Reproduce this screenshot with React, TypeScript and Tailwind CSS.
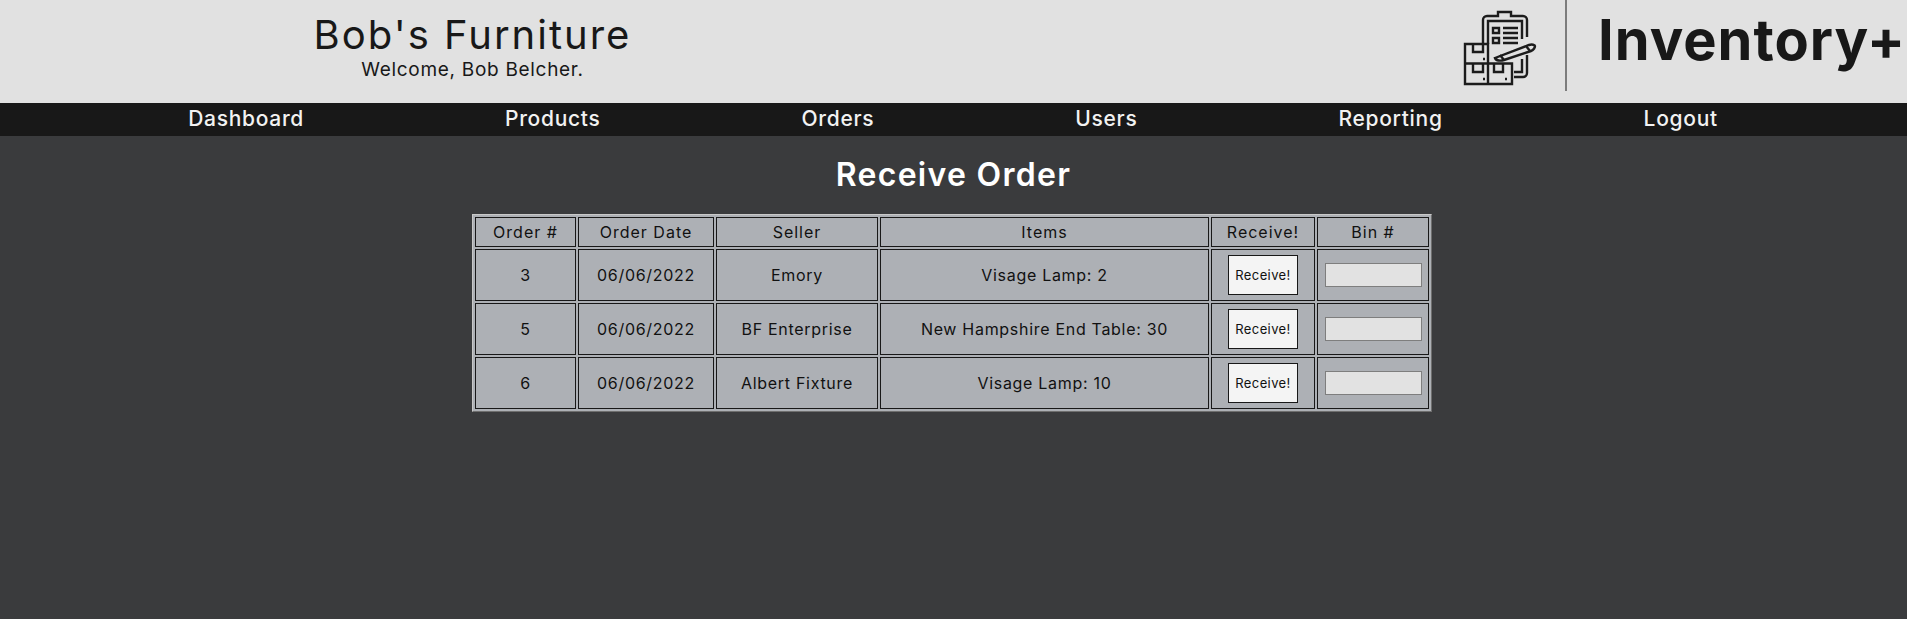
const NAV_LINKS = ['Dashboard', 'Products', 'Orders', 'Users', 'Reporting', 'Logout'];

const ORDERS = [
  { id: 3, date: '06/06/2022', seller: 'Emory', items: 'Visage Lamp: 2' },
  { id: 5, date: '06/06/2022', seller: 'BF Enterprise', items: 'New Hampshire End Table: 30' },
  { id: 6, date: '06/06/2022', seller: 'Albert Fixture', items: 'Visage Lamp: 10' },
];

function InventoryIcon() {
  return (
    <svg width="80" height="78" viewBox="0 0 80 78" fill="none" stroke="#1c1c1c" strokeWidth="2.4" className="blur-[0.4px]">
      {/* clipboard */}
      <path d="M23 34V10a4 4 0 0 1 4-4h11V2h13v4h12a4 4 0 0 1 4 4v17" />
      <path d="M28 34V11h34v18" />
      <path d="M67 45v18a4 4 0 0 1-4 4h-9" />
      <path d="M62 49v13h-8" />
      <path d="M33 18h6v5h-6zM33 28h6v5h-6z" />
      <path d="M43 18h15M43 23h15M43 28h15M43 33h15" />
      {/* pen */}
      <path d="M35 48l34-13c3-1 6 0 6 1s-1 4-4 5L44 50c-3 1-8 1-9-2z" />
      <path d="M40 45l4 5M66 36l4 5" />
      {/* boxes */}
      <path d="M5 34h23v19.500H5zM5 53.500h23V74H5zM28 53.500h24V74H28z" />
      <path d="M13 34v8h10v-8M13 54v8h10v-8M34 54v8h9v-8" />
      <path d="M23 49h2M23 69h2M45 69h2" />
    </svg>
  );
}

export default function App() {
  return (
    <div className="min-h-[619px] bg-[#3a3b3d] font-['Inter','Noto_Sans',sans-serif]">
      <header className="flex h-[103px] bg-[#e1e1e1] text-[#181818]">
        <div className="flex w-[945px] flex-col items-center pt-[12px]">
          <div className="text-[40px] leading-[46px] tracking-[2px]">Bob's Furniture</div>
          <div className="text-[19px] leading-[24px] tracking-[0.7px]">Welcome, Bob Belcher.</div>
        </div>
        <div className="ml-auto flex">
          <div className="pt-[10px]">
            <InventoryIcon />
          </div>
          <div className="ml-[25px] h-[91px] w-[2px] bg-[#7c7c7c]" />
          <div className="ml-[31px] w-[309px] pt-[6px] text-[56px] font-bold leading-[68px] tracking-[1px]">Inventory+</div>
        </div>
      </header>
      <nav className="flex h-[33px] items-center justify-center gap-[201px] bg-[#181818] pb-[1px] pr-[1px] text-[21px] font-medium tracking-[0.7px] text-[#f2f2f2]">
        {NAV_LINKS.map(link => (
          <a key={link} href="#">{link}</a>
        ))}
      </nav>
      <main>
        <h1 className="flex h-[78px] items-center justify-center text-[32px] font-semibold tracking-[1.3px] text-white">Receive Order</h1>
        <table className="ml-[472px] w-[960px] table-fixed border-separate border-spacing-[2px] border border-t-[#c8c8c8] border-l-[#c8c8c8] border-r-[#6e6e6e] border-b-[#6e6e6e] bg-[#adb0b5] text-center text-[16px] tracking-[0.7px] text-[#111111]">
          <colgroup>
            <col className="w-[101px]" />
            <col className="w-[136px]" />
            <col className="w-[162px]" />
            <col className="w-[329px]" />
            <col className="w-[104px]" />
            <col className="w-[112px]" />
          </colgroup>
          <thead>
            <tr className="h-[30px]">
              {['Order #', 'Order Date', 'Seller', 'Items', 'Receive!', 'Bin #'].map(h => (
                <th key={h} className="border border-[#181818] p-0 pb-[1px] font-normal tracking-[1px]">{h}</th>
              ))}
            </tr>
          </thead>
          <tbody>
            {ORDERS.map(o => (
              <tr key={o.id} className="h-[52px]">
                <td className="border border-[#181818] p-0 pb-[1px]">{o.id}</td>
                <td className="border border-[#181818] p-0 pb-[1px]">{o.date}</td>
                <td className="border border-[#181818] p-0 pb-[1px]">{o.seller}</td>
                <td className="border border-[#181818] p-0 pb-[1px]">{o.items}</td>
                <td className="border border-[#181818] p-0">
                  <button className="mx-auto block h-[40px] w-[70px] border border-[#181818] bg-[#f4f4f4] pt-[1px] text-[13px] tracking-[0.4px]">Receive!</button>
                </td>
                <td className="border border-[#181818] p-0">
                  <input className="mx-auto block h-[24px] w-[97px] border border-[#7e7e7e] bg-[#e2e2e2]" />
                </td>
              </tr>
            ))}
          </tbody>
        </table>
      </main>
    </div>
  );
}
